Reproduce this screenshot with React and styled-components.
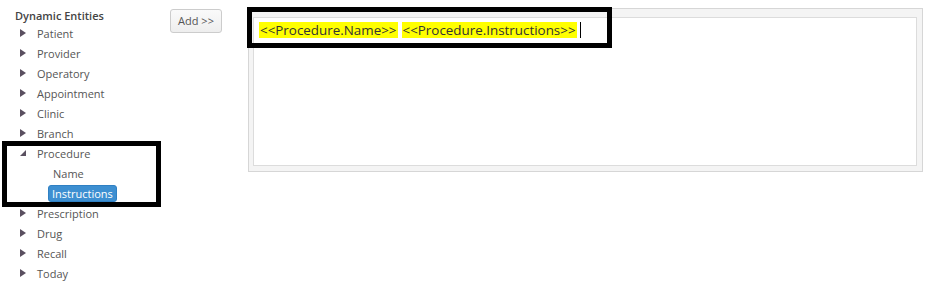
import styled, { createGlobalStyle } from 'styled-components';

const GlobalStyle = createGlobalStyle`
    html, body {
        margin: 0;
        padding: 0;
        background: #fff;
        font-family: 'Open Sans', 'Liberation Sans', sans-serif;
    }
`;

const Page = styled.div`
    display: flex;
    align-items: flex-start;
    width: 940px;
    height: 284px;
    overflow: hidden;
`;

const Sidebar = styled.div`
    width: 170px;
    flex-shrink: 0;
    padding: 9px 0 0 15px;
    box-sizing: border-box;
`;

const Heading = styled.div`
    font-size: 11px;
    font-weight: 600;
    color: #444;
    line-height: 14px;
    height: 14px;
`;

const TreeList = styled.ul`
    list-style: none;
    margin: 0;
    padding: 0;
`;

const Node = styled.li`
    display: flex;
    align-items: center;
    height: 20px;
    font-size: 11px;
    color: #555;
    padding-left: ${(p) => (p.$child ? '37px' : '0')};
`;

const Toggle = styled.span`
    width: 15px;
    margin-right: 6px;
    display: flex;
    justify-content: center;
    align-items: center;
`;

const Marked = styled.div`
    position: relative;

    &::after {
        content: '';
        position: absolute;
        left: -13px;
        top: -2px;
        width: 159px;
        height: 66px;
        border: 5px solid #000;
        box-sizing: border-box;
        pointer-events: none;
    }
`;

const Label = styled.span`
    padding: 0 ${(p) => (p.$selected ? '3px' : '0')};
    margin-left: ${(p) => (p.$selected ? '-4px' : '0')};
    border-radius: 3px;
    line-height: 15px;
    background: ${(p) => (p.$selected ? '#3d8fd1' : 'transparent')};
    color: ${(p) => (p.$selected ? '#fff' : '#555')};
    border: 1px solid ${(p) => (p.$selected ? '#2f80c3' : 'transparent')};
`;

const ButtonCol = styled.div`
    width: 78px;
    flex-shrink: 0;
    padding-top: 8px;
`;

const AddButton = styled.button`
    width: 52px;
    height: 24px;
    border: 1px solid #ccc;
    border-radius: 3px;
    background: linear-gradient(#fafafa, #eee);
    color: #555;
    font-family: 'Open Sans', 'Liberation Sans', sans-serif;
    font-size: 11px;
    padding: 0;
`;

const EditorFrame = styled.div`
    position: relative;
    margin-top: 8px;
    width: 675px;
    height: 164px;
    box-sizing: border-box;
    border: 1px solid #d6d6d6;
    background: #f4f4f4;
    padding: 8px 5px 4px 4px;
`;

const EditorBody = styled.div`
    box-sizing: border-box;
    height: 149px;
    border: 1px solid #dcdcdc;
    background: #fff;
    padding: 4px 5px;
    display: flex;
    align-items: flex-start;
    gap: 4px;
    font-family: 'Open Sans', 'Liberation Sans', sans-serif;
    font-size: 13.4px;
    color: #333;
`;

const Token = styled.span`
    background: #ffff00;
    line-height: 16px;
    padding: 0 1px;
`;

const Caret = styled.span`
    width: 1px;
    height: 16px;
    background: #000;
    margin-left: -1px;
`;

const Callout = styled.div`
    position: absolute;
    left: -2px;
    top: -2px;
    width: 365px;
    height: 41px;
    border: 5px solid #000;
    box-sizing: border-box;
    pointer-events: none;
`;

function Arrow({ open }) {
    if (open) {
        return (
            <svg width="6" height="6" viewBox="0 0 6 6">
                <polygon points="6,0 6,6 0,6" fill="#5a5060" />
            </svg>
        );
    }
    return (
        <svg width="6" height="8" viewBox="0 0 6 8">
            <polygon points="0,0 6,4 0,8" fill="#5a5060" />
        </svg>
    );
}

const before = ['Patient', 'Provider', 'Operatory', 'Appointment', 'Clinic', 'Branch'];
const after = ['Prescription', 'Drug', 'Recall', 'Today'];

function TreeNode({ name }) {
    return (
        <Node>
            <Toggle>
                <Arrow />
            </Toggle>
            <Label>{name}</Label>
        </Node>
    );
}

export default function App() {
    return (
        <>
            <GlobalStyle />
            <Page>
                <Sidebar>
                    <Heading>Dynamic Entities</Heading>
                    <TreeList>
                        {before.map((n) => (
                            <TreeNode key={n} name={n} />
                        ))}
                    </TreeList>
                    <Marked>
                        <TreeList>
                            <Node>
                                <Toggle>
                                    <Arrow open />
                                </Toggle>
                                <Label>Procedure</Label>
                            </Node>
                            <Node $child>
                                <Label>Name</Label>
                            </Node>
                            <Node $child>
                                <Label $selected>Instructions</Label>
                            </Node>
                        </TreeList>
                    </Marked>
                    <TreeList>
                        {after.map((n) => (
                            <TreeNode key={n} name={n} />
                        ))}
                    </TreeList>
                </Sidebar>
                <ButtonCol>
                    <AddButton>Add &gt;&gt;</AddButton>
                </ButtonCol>
                <EditorFrame>
                    <EditorBody>
                        <Token>&lt;&lt;Procedure.Name&gt;&gt;</Token>
                        <Token>&lt;&lt;Procedure.Instructions&gt;&gt;</Token>
                        <Caret />
                    </EditorBody>
                    <Callout />
                </EditorFrame>
            </Page>
        </>
    );
}
